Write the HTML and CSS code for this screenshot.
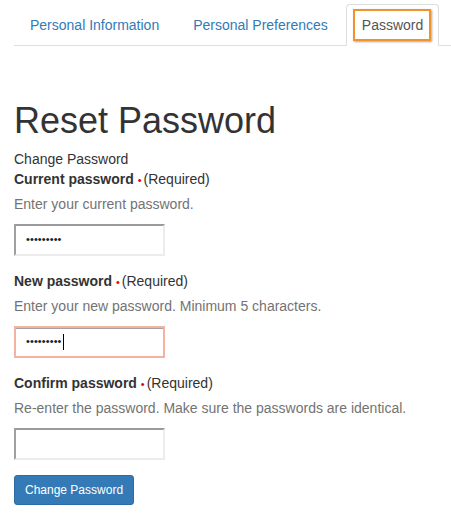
FILE: index.html
```html
<!DOCTYPE html>
<html>
<head>
<meta charset="utf-8">
<link rel="stylesheet" href="styles.css">
</head>
<body>
<div class="page">
  <ul class="tabs">
    <li class="tab"><a class="tab-link">Personal Information</a></li>
    <li class="tab"><a class="tab-link">Personal Preferences</a></li>
    <li class="tab active"><a class="tab-link"><span class="focus-ring"></span>Password</a></li>
  </ul>

  <h1 class="title">Reset Password</h1>
  <div class="legend">Change Password</div>

  <div class="group">
    <div class="label"><b>Current password</b> <span class="req">•</span>(Required)</div>
    <div class="help">Enter your current password.</div>
    <div class="input"><span class="dots">•••••••••</span></div>
  </div>

  <div class="group">
    <div class="label"><b>New password</b> <span class="req">•</span>(Required)</div>
    <div class="help">Enter your new password. Minimum 5 characters.</div>
    <div class="input focused"><span class="dots">•••••••••</span><span class="caret"></span></div>
  </div>

  <div class="group">
    <div class="label"><b>Confirm password</b> <span class="req">•</span>(Required)</div>
    <div class="help">Re-enter the password. Make sure the passwords are identical.</div>
    <div class="input"></div>
  </div>

  <button class="btn">Change Password</button>
</div>
</body>
</html>
```

FILE: styles.css
```css
html, body {
  margin: 0;
  padding: 0;
  background: #fff;
}
body {
  font-family: "Liberation Sans", Arial, sans-serif;
  font-size: 14px;
  line-height: 20px;
  color: #333;
}
.page {
  padding: 4px 0 0 14px;
}
.tabs {
  list-style: none;
  margin: 0;
  padding: 0;
  display: flex;
  border-bottom: 1px solid #ddd;
}
.tab {
  margin-bottom: -1px;
}
.tab-link {
  position: relative;
  display: block;
  margin-right: 2px;
  padding: 10px 15px;
  border: 1px solid transparent;
  border-radius: 4px 4px 0 0;
  color: #337ab7;
  line-height: 20px;
}
.tab.active .tab-link {
  color: #555;
  background: #fff;
  border-color: #ddd #ddd transparent #ddd;
}
.focus-ring {
  position: absolute;
  left: 6px;
  right: 7px;
  top: 4px;
  bottom: 4px;
  border: 2px solid #f0922d;
  box-shadow: 1px 1px 2px rgba(0,0,0,0.35);
}
.title {
  margin: 55px 0 8px;
  font-size: 36px;
  line-height: 39.6px;
  font-weight: 500;
  color: #333;
}
.legend {
  line-height: 20px;
}
.group {
  margin-bottom: 15px;
}
.label {
  height: 20px;
}
.label b {
  font-weight: bold;
}
.req {
  color: #e00000;
  font-size: 11px;
  line-height: 0;
  margin-right: 2px;
}
.help {
  margin: 5px 0 10px;
  color: #737373;
}
.input {
  box-sizing: border-box;
  width: 151px;
  height: 32px;
  border-style: solid;
  border-width: 2px;
  border-color: #9a9a9a #ececec #ececec #a0a0a0;
  padding: 0 10px;
  display: flex;
  align-items: center;
}
.input.focused {
  border-color: #f2b3a0;
  box-shadow: inset 0 1px 0 #a8a0a0;
}
.dots {
  font-size: 11px;
  line-height: 1;
  letter-spacing: 0.1px;
  color: #222;
}
.caret {
  display: inline-block;
  width: 1px;
  height: 16px;
  background: #000;
  margin-left: 1px;
}
.btn {
  display: block;
  margin-top: 2px;
  padding: 5px 10px;
  font-family: "Liberation Sans", Arial, sans-serif;
  font-size: 12px;
  line-height: 18px;
  color: #fff;
  background: #337ab7;
  border: 1px solid #2e6da4;
  border-radius: 3px;
}
```
